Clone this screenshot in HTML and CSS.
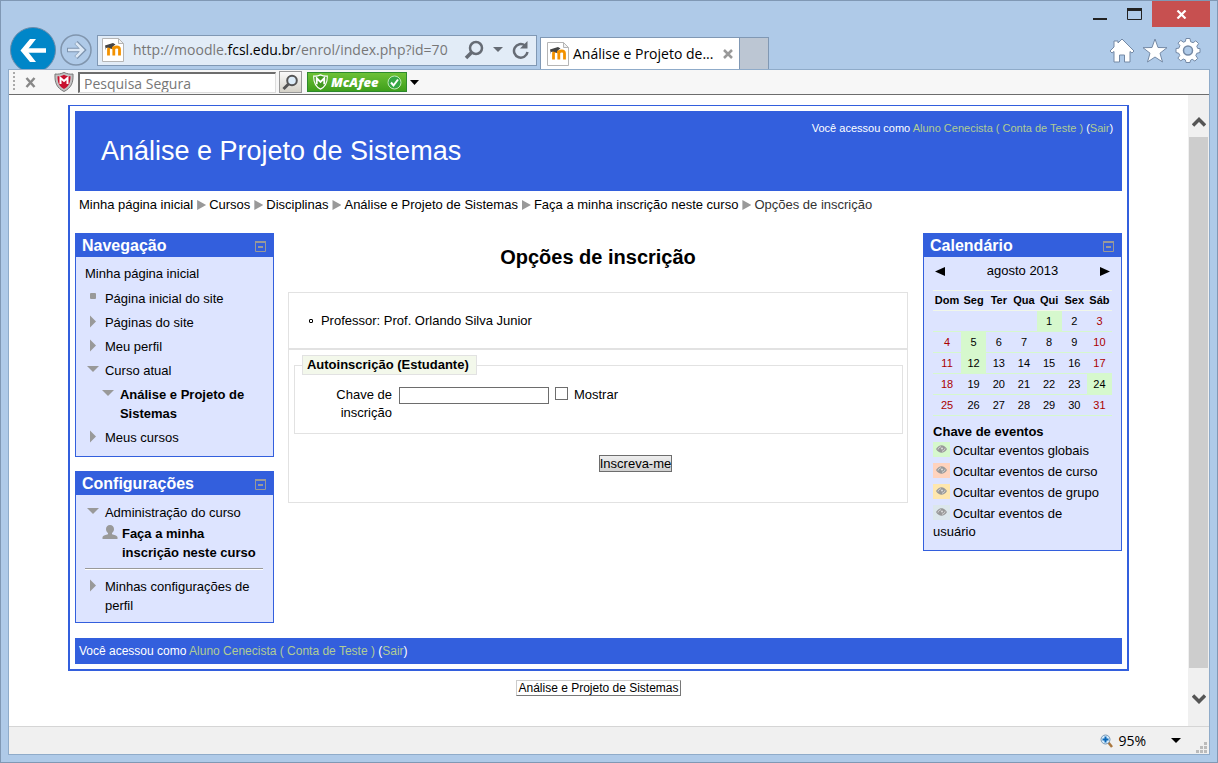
FILE: index.html
```html
<!DOCTYPE html>
<html lang="pt-br">
<head>
<meta charset="utf-8">
<title>Análise e Projeto de Sistemas</title>
<link rel="stylesheet" href="styles.css">
</head>
<body>
<svg class="defs" aria-hidden="true">
  <symbol id="right" viewBox="0 0 16 16"><path d="M5 2.500v12L11 8.500z" fill="#999"/></symbol>
  <symbol id="down" viewBox="0 0 16 16"><path d="M2 5h12l-6 6z" fill="#999"/></symbol>
  <symbol id="dot" viewBox="0 0 16 16"><rect x="5" y="4" width="6" height="6" rx="1" fill="#999"/></symbol>
  <symbol id="user" viewBox="0 0 16 16"><path d="M8 1c-2.500 0-4 1.700-4 4 0 1.800.7 3.200 2 4v1.300c-2 .7-5 1-5.500 2.700V15h15v-2c-.5-1.700-3.500-2-5.500-2.700V9c1.300-.8 2-2.200 2-4 0-2.300-1.500-4-4-4z" fill="#999"/></symbol>
  <symbol id="eye" viewBox="0 0 17 15"><path d="M3 7c1.500-2.500 3.500-3.800 5.500-3.800S12.500 4.500 14 7c-1.500 2.500-3.500 3.800-5.500 3.800S4.500 9.500 3 7z" fill="#999"/><path d="M5 7.500C5.500 5.500 7 4.800 8 4.800M12 6.500c-.5 2-2 2.700-3 2.700" fill="none" stroke="#ddd"/><circle cx="9" cy="6.500" r="1" fill="#ddd"/></symbol>
  <symbol id="fold" viewBox="0 0 11 11"><path d="M.5.500h10v10H.500z" fill="none" stroke="#999"/><path d="M0 0h11v2H0zM3 5h5v2H3z" fill="#999"/></symbol>
  <symbol id="moodle" viewBox="0 0 22 24"><path d="M.5.500h16l5 5v18H.500z" fill="#fff" stroke="#b5b5b5"/><path d="M16.500.500v5h5z" fill="#f1f1f1" stroke="#b5b5b5"/><path d="M6.500 17.500v-6q0-2.500 2.500-2.500t2.800 2.500v6m0-6Q12 9 14.800 9t2.700 2.500v6" fill="none" stroke="#f39200" stroke-width="2.800"/><path d="M3 7.500L11 5l2.500 1.500L10 9v2l-3.500-1.500-2.500.500v2.500z" fill="#444"/></symbol>
  <symbol id="shield" viewBox="0 0 20 20"><path d="M1 2c3 .5 6-.2 9-1.500C13 1.800 16 2.500 19 2c.5 9-2 14-9 17.500C3 16 .5 11 1 2z" fill="#c3c3c3" stroke="#777"/><path d="M3.500 4.200C6 4.200 8 3.700 10 2.700c2 1 4 1.500 6.500 1.500C16.500 11 14.500 14.600 10 17 5.500 14.600 3.500 11 3.500 4.200z" fill="#c8102e"/><path d="M6.500 12V6l3.500 3 3.500-3v6" fill="none" stroke="#fff" stroke-width="2"/></symbol>
</svg>

<div class="window">
  <div class="titlebar">
    <button class="winbtn" aria-label="Minimizar"><svg width="14" height="19"><path d="M0 18h14" stroke="#222" stroke-width="2"/></svg></button>
    <button class="winbtn" aria-label="Maximizar"><svg width="15" height="12"><path d="M.5.500h14v11H.500z" fill="none" stroke="#222"/><path d="M0 0h15v3H0z" fill="#222"/></svg></button>
    <button class="winbtn close" aria-label="Fechar"><svg width="11" height="9"><path d="M1.500.500l8 8m0-8l-8 8" stroke="#fff" stroke-width="2.200"/></svg></button>
  </div>

  <div class="navbar">
    <button class="back" aria-label="Voltar"><svg width="46" height="46" viewBox="0 0 46 46"><circle cx="23" cy="23" r="22.500" fill="#0086c8" stroke="#6c8cab"/><path d="M36 23.500H14" fill="none" stroke="#fff" stroke-width="4.500"/><path d="M20 12h6l-9 11.500 9 11.500h-6l-9.500-11.500z" fill="#fff"/></svg></button>
    <button class="forward" aria-label="Avançar"><svg width="32" height="32" viewBox="0 0 32 32"><circle cx="16" cy="16" r="15" fill="none" stroke="#8095ad" stroke-width="1.500"/><path d="M7 16h16M16 8.500l7.500 7.500-7.500 7.500" fill="none" stroke="#7c93ae" stroke-width="4.500"/><path d="M8 16h15M16 9l7 7-7 7" fill="none" stroke="#dce8f5" stroke-width="2.500"/></svg></button>
    <div class="address">
      <svg width="22" height="24"><use href="#moodle"/></svg>
      <div class="url" role="textbox" aria-label="Endereço">http://moodle.<b>fcsl.edu.br</b>/enrol/index.php?id=70</div>
      <button aria-label="Pesquisar"><svg width="20" height="20"><circle cx="12" cy="8" r="6" fill="none" stroke="#666c75" stroke-width="2.500"/><path d="M8 12l-6 6" stroke="#666c75" stroke-width="3.500"/></svg></button>
      <button aria-label="Mostrar histórico"><svg width="10" height="6"><path d="M0 0h10L5 5z" fill="#666c75"/></svg></button>
      <button aria-label="Atualizar"><svg width="18" height="19"><path d="M13 4.500A6.800 6.800 0 1 0 15.500 11" fill="none" stroke="#666c75" stroke-width="2.500"/><path d="M15.500 0v7.500H8z" fill="#666c75"/></svg></button>
    </div>
    <div class="tab"><svg width="22" height="24"><use href="#moodle"/></svg><span>Análise e Projeto de...</span><button aria-label="Fechar guia"><svg width="10" height="10"><path d="M1 1l8 8m0-8L1 9" stroke="#999" stroke-width="2.500"/></svg></button></div>
    <button class="newtab" aria-label="Nova guia"></button>
    <div class="tools">
      <button aria-label="Página inicial"><svg width="26" height="25" viewBox="0 0 26 25"><path d="M13 1l4 4 8 8-2 2-2-1.500V24h-5.500v-7h-5v7H5V13.500L3 15l-2-2 4-4V3h4v2z" fill="#fff" stroke="#7489a5"/></svg></button>
      <button aria-label="Favoritos"><svg width="26" height="25" viewBox="0 0 26 25"><path d="M13 1l3 8.500 9 .2-7 5.500 2.500 8.800-7.500-5-7.500 5L8 15.200 1 9.700l9-.2z" fill="#fff" stroke="#7489a5"/></svg></button>
      <button aria-label="Ferramentas"><svg width="26" height="25" viewBox="-13 -12.500 26 25"><path d="M-2-12h4l.6 3.200 2.500 1 2.700-1.900 2.800 2.800-1.800 2.700 1 2.200L12-2v4l-3.200.8-1 2.300 1.900 2.700-2.800 2.800-2.700-1.800-1.600.9L2 12h-4l-.6-2.600-2.100-.9-2.600 1.900-2.800-2.800L-8.200 5l-1-2.200L-12 2v-4l2.800-.3 1.100-2.600-1.900-2.500 2.800-2.800 2.600 1.900 2-.8z" fill="#fff" stroke="#7489a5"/><circle r="4.500" fill="#afcae8" stroke="#7489a5" stroke-width="1.500"/></svg></button>
    </div>
  </div>

  <div class="client">
    <div class="toolbar">
      <i class="grip"></i>
      <button class="tbclose" aria-label="Fechar barra"><svg width="11" height="11"><path d="M1.500 1l8 9m0-9l-8 9" stroke="#888" stroke-width="2.500"/></svg></button>
      <svg width="20" height="20"><use href="#shield"/></svg>
      <input class="safe" type="text" placeholder="Pesquisa Segura" aria-label="Pesquisa Segura">
      <button class="safego" aria-label="Buscar"><svg width="17" height="17"><circle cx="10" cy="6.500" r="4.800" fill="#dcecf8" stroke="#555" stroke-width="2"/><path d="M6.500 10l-5 5" stroke="#555" stroke-width="3"/></svg></button>
      <button class="mcafee"><svg width="15" height="16" viewBox="0 0 20 20"><path d="M1 2c3 .5 6-.2 9-1.500C13 1.800 16 2.500 19 2c.5 9-2 14-9 17.500C3 16 .5 11 1 2z" fill="#439a22" stroke="#fff" stroke-width="1.500"/><path d="M5 13V5l5 5 5-5v8" fill="none" stroke="#fff" stroke-width="2.500"/></svg><span>McAfee</span><svg width="15" height="15"><circle cx="7.500" cy="7.500" r="6.500" fill="#35a745" stroke="#c0eab8"/><path d="M4 7.500l2.500 3 4.500-6" fill="none" stroke="#fff" stroke-width="2"/></svg></button>
      <button aria-label="Opções do McAfee"><svg width="9" height="5"><path d="M0 0h9L4.500 5z"/></svg></button>
    </div>

    <div class="viewport">
      <div class="canvas">
        <div class="page">
          <header class="header">
            <h1>Análise e Projeto de Sistemas</h1>
            <div class="login">Você acessou como <a href="#">Aluno Cenecista ( Conta de Teste )</a> (<a href="#">Sair</a>)</div>
          </header>
          <nav class="crumbs">
            <a href="#">Minha página inicial</a><i></i><a href="#">Cursos</a><i></i><a href="#">Disciplinas</a><i></i><a href="#">Análise e Projeto de Sistemas</a><i></i><a href="#">Faça a minha inscrição neste curso</a><i></i><span>Opções de inscrição</span>
          </nav>
          <div class="columns">
            <aside class="side">
              <section class="block">
                <h2>Navegação<button aria-label="Ocultar Navegação"><svg width="11" height="11"><use href="#fold"/></svg></button></h2>
                <ul class="tree">
                  <li class="root"><a href="#">Minha página inicial</a></li>
                  <li class="sub"><svg width="16" height="16"><use href="#dot"/></svg><a href="#">Página inicial do site</a></li>
                  <li class="sub"><svg width="16" height="16"><use href="#right"/></svg><a href="#">Páginas do site</a></li>
                  <li class="sub"><svg width="16" height="16"><use href="#right"/></svg><a href="#">Meu perfil</a></li>
                  <li class="sub"><svg width="16" height="16"><use href="#down"/></svg><a href="#">Curso atual</a></li>
                  <li class="sub deep"><svg width="16" height="16"><use href="#down"/></svg><a href="#">Análise e Projeto de Sistemas</a></li>
                  <li class="sub"><svg width="16" height="16"><use href="#right"/></svg><a href="#">Meus cursos</a></li>
                </ul>
              </section>
              <section class="block">
                <h2>Configurações<button aria-label="Ocultar Configurações"><svg width="11" height="11"><use href="#fold"/></svg></button></h2>
                <ul class="tree settings">
                  <li class="sub"><svg width="16" height="16"><use href="#down"/></svg><a href="#">Administração do curso</a></li>
                  <li class="sub deep"><svg width="16" height="16"><use href="#user"/></svg><a href="#">Faça a minha inscrição neste curso</a></li>
                </ul>
                <hr>
                <ul class="tree last">
                  <li class="sub"><svg width="16" height="16"><use href="#right"/></svg><a href="#">Minhas configurações de perfil</a></li>
                </ul>
              </section>
            </aside>

            <main class="main">
              <h2>Opções de inscrição</h2>
              <div class="box info"><ul><li>Professor: Prof. Orlando Silva Junior</li></ul></div>
              <form class="box">
                <fieldset>
                  <legend>Autoinscrição (Estudante)</legend>
                  <div class="row">
                    <label class="keylabel" for="key">Chave de inscrição</label>
                    <input class="key" id="key" type="password">
                    <input class="check" id="show" type="checkbox">
                    <label for="show">Mostrar</label>
                  </div>
                </fieldset>
                <button class="enrol" type="button">Inscreva-me</button>
              </form>
            </main>

            <aside class="side">
              <section class="block">
                <h2>Calendário<button aria-label="Ocultar Calendário"><svg width="11" height="11"><use href="#fold"/></svg></button></h2>
                <div class="calendar">
                  <div class="month"><a href="#" aria-label="Mês anterior"><svg width="10" height="9"><path d="M10 0v9L0 4.500z"/></svg></a><a href="#">agosto 2013</a><a href="#" aria-label="Próximo mês"><svg width="10" height="9"><path d="M0 0v9l10-4.500z"/></svg></a></div>
                  <table>
                    <thead><tr><th>Dom</th><th>Seg</th><th>Ter</th><th>Qua</th><th>Qui</th><th>Sex</th><th>Sáb</th></tr></thead>
                    <tbody>
                      <tr><td></td><td></td><td></td><td></td><td class="ev">1</td><td>2</td><td class="we">3</td></tr>
                      <tr><td class="we">4</td><td class="ev">5</td><td>6</td><td>7</td><td>8</td><td>9</td><td class="we">10</td></tr>
                      <tr><td class="we">11</td><td class="ev">12</td><td>13</td><td>14</td><td>15</td><td>16</td><td class="we">17</td></tr>
                      <tr><td class="we">18</td><td>19</td><td>20</td><td>21</td><td>22</td><td>23</td><td class="ev">24</td></tr>
                      <tr><td class="we">25</td><td>26</td><td>27</td><td>28</td><td>29</td><td>30</td><td class="we">31</td></tr>
                    </tbody>
                  </table>
                  <h3>Chave de eventos</h3>
                  <ul class="keys">
                    <li><svg class="global" width="17" height="15"><use href="#eye"/></svg><a href="#">Ocultar eventos globais</a></li>
                    <li><svg class="course" width="17" height="15"><use href="#eye"/></svg><a href="#">Ocultar eventos de curso</a></li>
                    <li><svg class="group" width="17" height="15"><use href="#eye"/></svg><a href="#">Ocultar eventos de grupo</a></li>
                    <li><svg class="own" width="17" height="15"><use href="#eye"/></svg><a href="#">Ocultar eventos de usuário</a></li>
                  </ul>
                </div>
              </section>
            </aside>
          </div>
          <footer class="footer">Você acessou como <a href="#">Aluno Cenecista ( Conta de Teste )</a> (<a href="#">Sair</a>)</footer>
        </div>
        <a class="home" href="#">Análise e Projeto de Sistemas</a>
      </div>
      <div class="scroll">
        <button class="up" aria-label="Rolar para cima"><svg width="14" height="12"><path d="M1 9.500l6-6 6 6" fill="none" stroke="#555" stroke-width="3.500"/></svg></button>
        <div class="track"><div class="thumb"></div></div>
        <button class="dn" aria-label="Rolar para baixo"><svg width="14" height="12"><path d="M1 2.500l6 6 6-6" fill="none" stroke="#555" stroke-width="3.500"/></svg></button>
      </div>
    </div>

    <div class="status">
      <button class="zoom"><svg width="13" height="14"><path d="M8 8l4 5" stroke="#a9773f" stroke-width="2.500"/><circle cx="5.500" cy="5.500" r="4.500" fill="#d7ebfb" stroke="#7897b3"/><path d="M5.500 2.500v6m-3-3h6" stroke="#0b68b8" stroke-width="2"/></svg><span>95%</span><svg class="caret" width="10" height="5"><path d="M0 0h10L5 5z"/></svg></button>
      <svg width="12" height="12" fill="#bbb"><path d="M8 0h3v3H8zM4 4h3v3H4zM8 4h3v3H8zM0 8h3v3H0zM4 8h3v3H4zM8 8h3v3H8z"/></svg>
    </div>
  </div>
</div>
</body>
</html>
```
FILE: styles.css
```css
* { box-sizing: border-box; }
body { margin: 0; font-family: "Liberation Sans", Arial, sans-serif; font-size: 13px; color: #000; }
svg { display: block; flex: none; }
button { border: 0; padding: 0; background: none; font: inherit; color: inherit; flex: none; }
ul { list-style: none; margin: 0; padding: 0; }
a { color: inherit; text-decoration: none; }
.defs { position: absolute; width: 0; height: 0; }

.window { min-height: 100vh; display: flex; flex-direction: column; background: #afcae8; border: 1px solid #8098b4; padding: 0 7px 7px; }
.titlebar { height: 26px; display: flex; justify-content: flex-end; align-items: flex-start; }
.winbtn { height: 26px; width: 34px; display: flex; justify-content: center; align-items: center; }
.winbtn:first-child { align-items: flex-start; }
.winbtn.close { width: 58px; margin-left: 1px; background: #c75050; }

.navbar { height: 42px; display: flex; align-items: center; padding: 0 9px 0 2px; overflow: hidden; }
.back { height: 42px; }
.forward { margin: 4px 5px 0 4px; }
.address { width: 440px; height: 31px; margin-top: 4px; border: 1px solid #8098b4; background: #e2ecf7; display: flex; align-items: center; padding: 0 6px 0 4px; gap: 9px; }
.address .url { flex: 1; font: 14px/24px "Open Sans", sans-serif; color: #777; white-space: nowrap; }
.url b { font-weight: 400; color: #000; }
.tab { align-self: flex-end; width: 200px; height: 32px; margin-left: 3px; border: 1px solid #8098b4; border-bottom: 0; background: #fff; display: flex; align-items: center; padding: 0 6px; gap: 4px; font: 14px/24px "Open Sans", sans-serif; white-space: nowrap; }
.tab span { flex: 1; }
.newtab { align-self: flex-end; width: 29px; height: 32px; border: 1px solid #8098b4; border-width: 1px 1px 0 0; background: #bcc6d3; }
.tools { margin-left: auto; display: flex; gap: 7px; margin-top: 5px; }

.client { flex: 1; display: flex; flex-direction: column; border: 1px solid #8fabc9; background: #fff; }
.toolbar { height: 25px; background: #f7f7f7; border-bottom: 1px solid #6d6d6d; display: flex; align-items: center; padding: 0 4px; }
.grip { width: 2px; height: 20px; background: repeating-linear-gradient(#aaa 0 2px, transparent 2px 4px); }
.tbclose { margin: 0 18px 0 10px; }
.safe { width: 198px; height: 21px; margin: 0 3px 0 4px; border: 1px solid #ddd; border-top: 2px solid #6d6d6d; border-left: 2px solid #6d6d6d; padding: 2px 4px 0; background: #fff; font: 14px/18px "Open Sans", sans-serif; }
.safe::placeholder { color: #777; opacity: 1; }
.safego { width: 23px; height: 22px; border: 1px solid #999; background: linear-gradient(#fafafa, #d5d2c8); display: flex; align-items: center; justify-content: center; }
.mcafee { width: 100px; height: 20px; margin: 0 3px 0 5px; border: 1px solid #2d8a2d; background: linear-gradient(#6dc136, #3f9f1c); display: flex; align-items: center; gap: 3px; padding: 0 4px 0 5px; color: #fff; font: italic 800 13px/18px "Open Sans", sans-serif; }
.mcafee span { flex: 1; text-align: left; }

.viewport { flex: 1; display: flex; }
.canvas { flex: 1; padding-top: 10px; display: flex; flex-direction: column; align-items: center; }
.page { width: 90%; border: 2px solid #335fdd; border-top-width: 1px; padding: 5px; }
.header { height: 80px; background: #335fdd; color: #fff; display: flex; justify-content: space-between; padding: 10px 9px 0 26px; }
.header h1 { margin: 14px 0 0; font-size: 27px; line-height: 32px; font-weight: 400; }
.login { font-size: 11px; line-height: 15px; }
.login a, .footer a { color: #b0cc94; }
.crumbs { display: flex; align-items: center; padding: 0 4px; height: 28px; line-height: 18px; margin-bottom: 14px; white-space: nowrap; }
.crumbs i { width: 9px; height: 10px; margin: 0 3px 0 4px; background: #999; clip-path: polygon(0 0, 100% 50%, 0 100%); }
.crumbs span { color: #333; }
.columns { display: flex; align-items: flex-start; }
.side { width: 199px; flex: none; display: flex; flex-direction: column; gap: 14px; }
.block { border: 1px solid #335fdd; background: #dde4ff; }
.block h2 { margin: 0; height: 23px; padding: 0 7px 0 6px; background: #335fdd; color: #fff; font-size: 16px; line-height: 22px; display: flex; align-items: center; justify-content: space-between; }
.block h2 button { margin-top: 2px; }

.tree { padding: 7px 9px 9px; line-height: 19px; }
.tree li + li { margin-top: 5px; }
.tree .root { padding-bottom: 1px; }
.tree .sub { display: flex; gap: 4px; }
.tree .deep { padding-left: 15px; font-weight: 700; }
.settings { padding: 8px 9px 6px; }
.settings li + li { margin-top: 2px; }
.settings .deep { padding-left: 17px; }
.last { padding-bottom: 7px; }
.block hr { margin: 0 10px 0 9px; border: 0; height: 2px; border-top: 1px solid #999; background: #fff; }

.main { flex: 1; margin: 0 15px 0 14px; min-width: 0; }
.main h2 { margin: 12px 0 23px; text-align: center; font-size: 20px; line-height: 24px; }
.box { border: 1px solid #e2e2e2; }
.info { padding: 18px 18px 17px; }
.info li { display: flex; align-items: center; line-height: 20px; padding-left: 2px; gap: 8px; }
.info li::before { content: ""; width: 2px; height: 2px; border: 1px solid #000; border-radius: 1px; }
form.box { display: flex; flex-direction: column; align-items: center; padding: 5px 4px 30px 5px; }
fieldset { align-self: stretch; margin: 0; border: 1px solid #e2e2e2; padding: 11px 7px 11px; }
legend { padding: 0 7px 0 4px; border: 1px solid #e2e2e2; background: #f3f8eb; font-weight: 700; line-height: 18px; }
.row { display: flex; align-items: flex-start; line-height: 18px; padding-left: 11px; }
.keylabel { width: 79px; text-align: right; padding-left: 10px; }
.key { width: 150px; height: 17px; margin: 1px 6px 0 7px; border: 1px solid #6d6d6d; }
.check { appearance: none; width: 13px; height: 13px; margin: 1px 6px 0 0; border: 1px solid #6d6d6d; background: #fff; }
.enrol { margin: 21px 0 0 74px; border: 1px solid #6d6d6d; height: 17px; line-height: 14px; background: linear-gradient(#eee, #d0d0d0); }

.calendar { padding: 4px 9px 9px; }
.month { display: flex; justify-content: space-between; align-items: center; padding: 0 2px; line-height: 20px; margin-bottom: 9px; }
table { width: 100%; border-collapse: collapse; table-layout: fixed; font-size: 11px; line-height: 20px; text-align: center; }
th, td { padding: 0; height: 21px; border-bottom: 1px solid #f1f7e8; }
th:first-child { width: 28px; }
th { height: 20px; line-height: 19px; border-top: 1px solid #f1f7e8; }
td { border-bottom-color: #d6f8cd; }
.ev { background: #d6f8cd; }
.we { color: #a00; }
.calendar h3 { margin: 7px 0 1px; font-size: 13px; line-height: 18px; }
.keys { padding-right: 8px; }
.keys li { line-height: 18px; margin-bottom: 3px; }
.keys li:last-child { margin-bottom: 0; }
.keys svg { display: inline-block; vertical-align: -2px; margin-right: 3px; }
.global { background: #d6f8cd; }
.course { background: #ffd3bd; }
.group { background: #fee7ae; }
.own { background: #dce7ec; }

.footer { margin-top: 15px; height: 26px; padding: 0 4px; background: #335fdd; color: #fff; font-size: 12px; line-height: 26px; }
.home { margin-top: 9px; border: 1px solid; border-color: #ccc #777 #777 #ccc; padding: 0 1px; font-size: 12px; line-height: 14px; }

.scroll { width: 21px; background: #f0f0f0; display: flex; flex-direction: column; align-items: center; }
.scroll button { height: 42px; }
.scroll .up { padding-top: 12px; }
.scroll .dn { padding-bottom: 12px; }
.track { flex: 1; align-self: stretch; display: flex; padding: 0 1px 16px; }
.thumb { flex: 1; background: #cdcdcd; }
.status { height: 28px; background: #f0f0f0; border-top: 1px solid #d5d5d5; display: flex; justify-content: flex-end; align-items: center; padding-right: 1px; }
.status > svg { align-self: flex-end; }
.zoom { display: flex; align-items: center; gap: 5px; margin-right: 15px; font: 14px/20px "Open Sans", sans-serif; }
.caret { margin-left: 20px; }
```
